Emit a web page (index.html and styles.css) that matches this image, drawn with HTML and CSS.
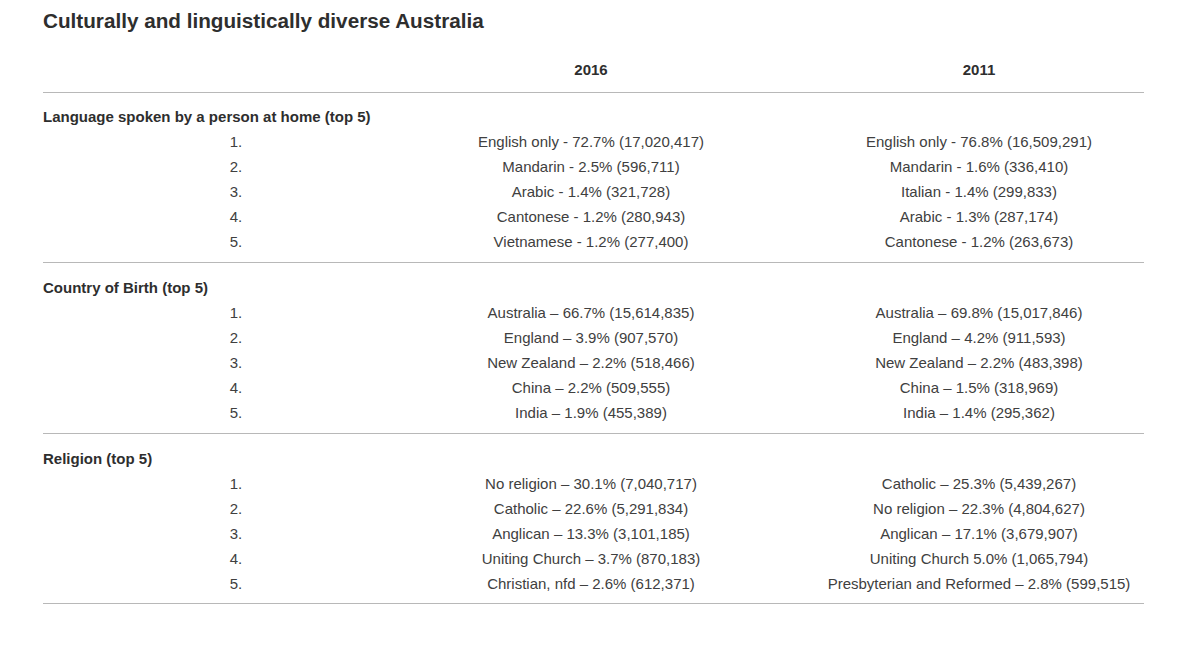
FILE: index.html
```html
<!DOCTYPE html>
<html>
<head>
<meta charset="utf-8">
<link rel="stylesheet" href="styles.css">
</head>
<body>
<div class="page">
  <h1 class="title">Culturally and linguistically diverse Australia</h1>
  <div class="table">
    <div class="head">
      <div></div><div></div><div class="year">2016</div><div class="year">2011</div>
    </div>
    <div class="section first">
      <div class="sec-title">Language spoken by a person at home (top 5)</div>
      <div></div><div class="num">1.</div><div class="val">English only - 72.7% (17,020,417)</div><div class="val">English only - 76.8% (16,509,291)</div>
      <div></div><div class="num">2.</div><div class="val">Mandarin - 2.5% (596,711)</div><div class="val">Mandarin - 1.6% (336,410)</div>
      <div></div><div class="num">3.</div><div class="val">Arabic - 1.4% (321,728)</div><div class="val">Italian - 1.4% (299,833)</div>
      <div></div><div class="num">4.</div><div class="val">Cantonese - 1.2% (280,943)</div><div class="val">Arabic - 1.3% (287,174)</div>
      <div></div><div class="num">5.</div><div class="val">Vietnamese - 1.2% (277,400)</div><div class="val">Cantonese - 1.2% (263,673)</div>
    </div>
    <div class="section">
      <div class="sec-title">Country of Birth (top 5)</div>
      <div></div><div class="num">1.</div><div class="val">Australia – 66.7% (15,614,835)</div><div class="val">Australia – 69.8% (15,017,846)</div>
      <div></div><div class="num">2.</div><div class="val">England – 3.9% (907,570)</div><div class="val">England – 4.2% (911,593)</div>
      <div></div><div class="num">3.</div><div class="val">New Zealand – 2.2% (518,466)</div><div class="val">New Zealand – 2.2% (483,398)</div>
      <div></div><div class="num">4.</div><div class="val">China – 2.2% (509,555)</div><div class="val">China – 1.5% (318,969)</div>
      <div></div><div class="num">5.</div><div class="val">India – 1.9% (455,389)</div><div class="val">India – 1.4% (295,362)</div>
    </div>
    <div class="section last">
      <div class="sec-title">Religion (top 5)</div>
      <div></div><div class="num">1.</div><div class="val">No religion – 30.1% (7,040,717)</div><div class="val">Catholic – 25.3% (5,439,267)</div>
      <div></div><div class="num">2.</div><div class="val">Catholic – 22.6% (5,291,834)</div><div class="val">No religion – 22.3% (4,804,627)</div>
      <div></div><div class="num">3.</div><div class="val">Anglican – 13.3% (3,101,185)</div><div class="val">Anglican – 17.1% (3,679,907)</div>
      <div></div><div class="num">4.</div><div class="val">Uniting Church – 3.7% (870,183)</div><div class="val">Uniting Church 5.0% (1,065,794)</div>
      <div></div><div class="num">5.</div><div class="val">Christian, nfd – 2.6% (612,371)</div><div class="val">Presbyterian and Reformed – 2.8% (599,515)</div>
    </div>
  </div>
</div>
</body>
</html>
```

FILE: styles.css
```css
html, body {
  margin: 0;
  padding: 0;
  background: #ffffff;
}
body {
  font-family: "Liberation Sans", Arial, sans-serif;
  color: #333333;
}
.page {
  padding: 8px 0 0 43px;
  width: 1101px;
}
.title {
  margin: 0;
  font-size: 20.7px;
  line-height: 25px;
  font-weight: bold;
  color: #2e2e2e;
}
.table {
  margin-top: 13px;
}
.head,
.section {
  display: grid;
  grid-template-columns: 61px 264px 446px 330px;
  border-bottom: 1px solid #b8b8b8;
}
.head {
  height: 46px;
  align-items: center;
}
.year {
  text-align: center;
  font-weight: bold;
  font-size: 15px;
  color: #2e2e2e;
}
.section {
  padding: 12px 0 8px;
  font-size: 15px;
  line-height: 25px;
  color: #404040;
}
.section.first {
  padding-top: 11px;
}
.section.last {
  padding-bottom: 7px;
}
.sec-title {
  grid-column: 1 / -1;
  font-weight: bold;
  color: #2e2e2e;
}
.num {
  text-align: center;
}
.val {
  text-align: center;
}
```
